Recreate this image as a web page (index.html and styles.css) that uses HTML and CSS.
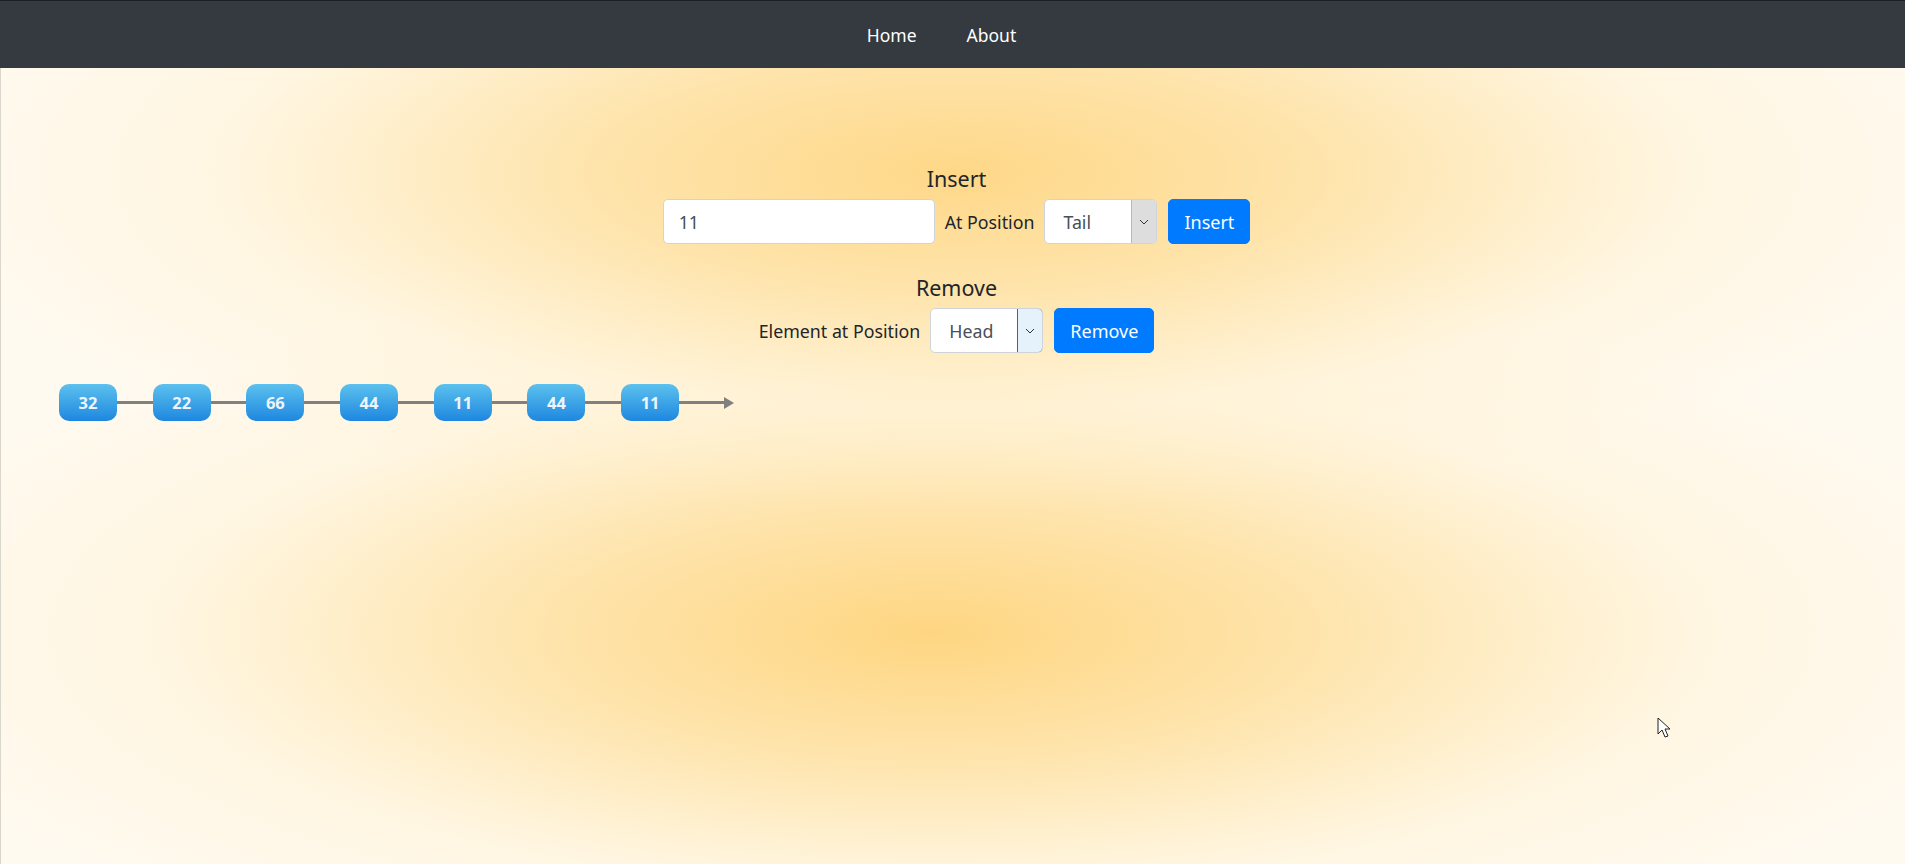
FILE: index.html
```html
<!DOCTYPE html>
<html lang="en">
<head>
<meta charset="utf-8">
<title>Linked List</title>
<link rel="stylesheet" href="styles.css">
</head>
<body>
<nav class="navbar">
  <ul class="nav-links">
    <li><a class="nav-link" href="#">Home</a></li>
    <li><a class="nav-link" href="#">About</a></li>
  </ul>
</nav>
<main class="page">
  <section class="controls">
    <h5 class="section-title">Insert</h5>
    <div class="form-row">
      <div class="text-input">11</div>
      <span class="label">At Position</span>
      <div class="select">
        <span class="select-value">Tail</span>
        <span class="select-arrow arrow-hover">
          <svg width="10" height="6" viewBox="0 0 10 6"><path d="M1 1 L5 5 L9 1" fill="none" stroke="#333" stroke-width="1"/></svg>
        </span>
      </div>
      <button class="btn">Insert</button>
    </div>
    <h5 class="section-title remove-title">Remove</h5>
    <div class="form-row">
      <span class="label">Element at Position</span>
      <div class="select">
        <span class="select-value">Head</span>
        <span class="select-arrow arrow-focus">
          <svg width="10" height="6" viewBox="0 0 10 6"><path d="M1 1 L5 5 L9 1" fill="none" stroke="#333" stroke-width="1"/></svg>
        </span>
      </div>
      <button class="btn">Remove</button>
    </div>
  </section>
  <section class="list">
    <div class="node">32</div><div class="link"></div>
    <div class="node">22</div><div class="link"></div>
    <div class="node">66</div><div class="link"></div>
    <div class="node">44</div><div class="link"></div>
    <div class="node">11</div><div class="link"></div>
    <div class="node">44</div><div class="link"></div>
    <div class="node">11</div><div class="link tail"></div><div class="arrow-head"></div>
  </section>
  <svg class="cursor" width="14" height="22" viewBox="0 0 14 22">
    <path d="M1 1 L1 17 L5 13 L8 20 L11 19 L8 12 L13 12 Z" fill="#fff" stroke="#222" stroke-width="1" stroke-linejoin="round"/>
  </svg>
</main>
</body>
</html>
```
FILE: styles.css
```css
* { box-sizing: border-box; }
html, body { margin: 0; padding: 0; }
body {
  font-family: "Noto Sans", "Open Sans", sans-serif;
  color: #212529;
  background: #fffaf0;
}
.navbar {
  height: 68px;
  background: #343a40;
  border-top: 1px solid #1c1f22;
  display: flex;
  align-items: center;
  justify-content: center;
  padding-right: 22px;
}
.nav-links {
  list-style: none;
  margin: 0;
  padding: 0;
  display: flex;
  gap: 50px;
}
.nav-link {
  color: #ffffff;
  text-decoration: none;
  font-size: 17.5px;
  line-height: 24px;
  display: block;
}
.page {
  position: relative;
  height: 796px;
  border-left: 1px solid #d9d7cc;
  background:
    radial-gradient(ellipse 1050px 340px at 956px 105px, rgba(254,216,136,1) 0%, rgba(254,222,153,0.78) 35%, rgba(255,240,205,0.4) 70%, rgba(255,250,240,0) 100%),
    radial-gradient(ellipse 1100px 360px at 930px 565px, rgba(254,214,130,1) 0%, rgba(254,222,153,0.78) 35%, rgba(255,240,205,0.4) 70%, rgba(255,250,240,0) 100%),
    #fffaf0;
  overflow: hidden;
}
.controls {
  padding-top: 96px;
  padding-left: 7px;
  display: flex;
  flex-direction: column;
  align-items: center;
}
.section-title {
  margin: 0 0 6px;
  font-size: 21.5px;
  font-weight: 400;
  line-height: 29px;
  color: #212529;
}
.remove-title { margin-top: 29px; }
.form-row {
  display: flex;
  align-items: center;
  gap: 10px;
  height: 45px;
}
.label {
  font-size: 17.8px;
  color: #212529;
}
.text-input {
  width: 272px;
  height: 45px;
  background: #fff;
  border: 1px solid #ced4da;
  border-radius: 5px;
  padding: 0 15px;
  display: flex;
  align-items: center;
  font-size: 17.8px;
  color: #495057;
}
.select {
  width: 113px;
  height: 45px;
  background: #fff;
  border: 1px solid #ced4da;
  border-radius: 5px;
  display: flex;
  overflow: hidden;
}
.select-value {
  flex: 1;
  display: flex;
  align-items: center;
  padding-left: 18px;
  font-size: 17.8px;
  color: #495057;
}
.select-arrow {
  width: 25px;
  display: flex;
  align-items: center;
  justify-content: center;
}
.arrow-hover {
  background: #dcdddc;
  border-left: 1px solid #b8b8b8;
}
.arrow-focus {
  background: #e5f1fb;
  border: 1px solid #0078d7;
  margin: -1px;
  width: 26px;
  border-radius: 0 5px 5px 0;
}
.btn {
  height: 45px;
  padding: 0 15px;
  background: #007bff;
  color: #fff;
  border: 1px solid #007bff;
  border-radius: 5px;
  font-family: inherit;
  font-size: 18px;
  margin-left: 1px;
}
.list {
  display: flex;
  align-items: center;
  padding-left: 58px;
  margin-top: 31px;
}
.node {
  width: 58px;
  height: 37px;
  border-radius: 10px;
  background: linear-gradient(#5cc1ee, #1e87df);
  color: #eef4fb;
  font-weight: 700;
  font-size: 16.5px;
  display: flex;
  align-items: center;
  justify-content: center;
  flex-shrink: 0;
}
.link {
  width: 35.7px;
  height: 3px;
  background: #808080;
  flex-shrink: 0;
}
.link.tail { width: 45px; }
.arrow-head {
  width: 0;
  height: 0;
  border-top: 6.5px solid transparent;
  border-bottom: 6.5px solid transparent;
  border-left: 10px solid #808080;
}
.cursor {
  position: absolute;
  left: 1656px;
  top: 649px;
}
```
